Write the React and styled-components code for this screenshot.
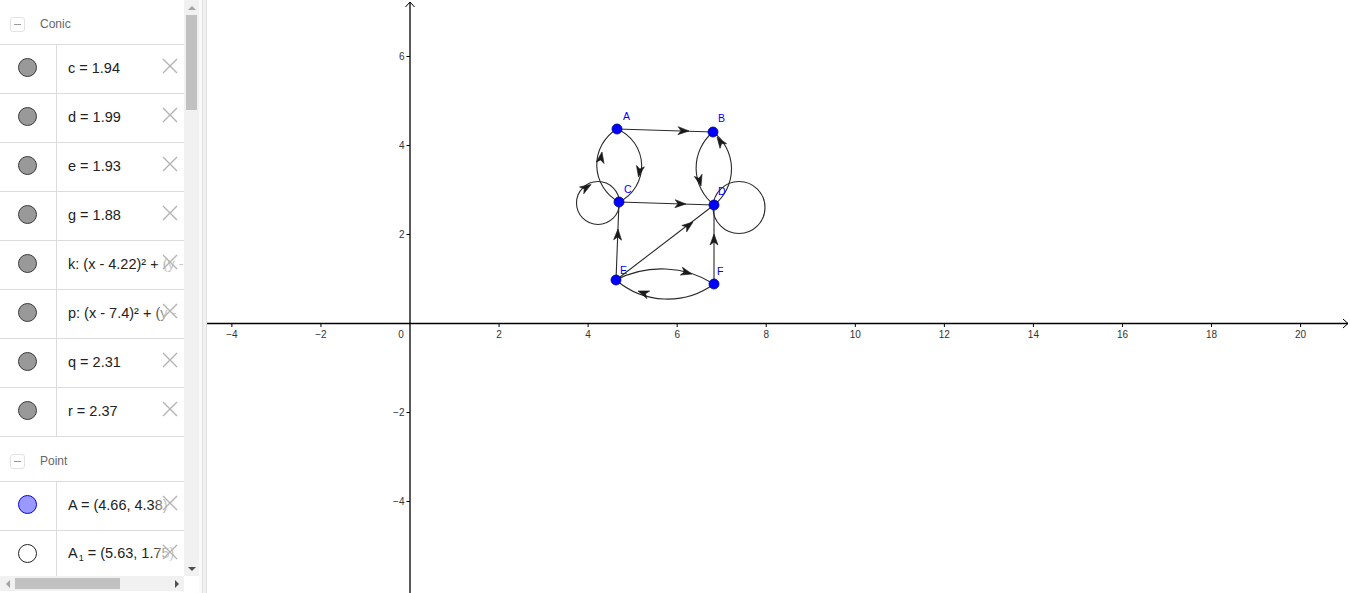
import React from "react";
import styled, { createGlobalStyle } from "styled-components";

const GlobalStyle = createGlobalStyle`
  html, body { margin: 0; padding: 0; background: #fff; overflow: hidden; }
  body { font-family: "Liberation Sans", Arial, sans-serif; }
`;

const Page = styled.div`
  display: flex;
  width: 1350px;
  height: 593px;
  background: #fff;
`;

const AlgebraPanel = styled.div`
  flex: none;
  width: 199px;
  height: 593px;
  display: grid;
  grid-template-columns: 184px 15px;
  grid-template-rows: 576px 15px;
  background: #fff;
`;

const ListArea = styled.div`
  overflow: hidden;
  position: relative;
`;

const GroupHeader = styled.div`
  height: 45px;
  box-sizing: border-box;
  padding: 4px 0 0 10px;
  display: flex;
  align-items: center;
  border-bottom: 1px solid #dddddd;
`;

const Toggle = styled.span`
  width: 15px;
  height: 15px;
  box-sizing: border-box;
  border: 1px solid #e2e2e2;
  border-radius: 3px;
  display: flex;
  align-items: center;
  justify-content: center;
  &::after {
    content: "";
    width: 7px;
    height: 1px;
    background: #9a9a9a;
  }
`;

const GroupTitle = styled.span`
  margin-left: 15px;
  font-size: 12px;
  color: #666;
`;

const Row = styled.div`
  position: relative;
  display: flex;
  height: 49px;
  box-sizing: border-box;
  border-bottom: 1px solid #dddddd;
`;

const MarkerCell = styled.div`
  flex: none;
  width: 57px;
  box-sizing: border-box;
  border-right: 1px solid #dddddd;
  display: flex;
  align-items: center;
  justify-content: center;
  padding: 0 1px 3px 0;
`;

const Dot = styled.span`
  width: 19px;
  height: 19px;
  box-sizing: border-box;
  border-radius: 50%;
  background: ${(p) => p.$fill};
  border: 1px solid ${(p) => p.$stroke};
`;

const Formula = styled.div`
  flex: 1;
  min-width: 0;
  display: flex;
  align-items: center;
  padding: 0 0 3px 11px;
  font-size: 14.5px;
  color: #222;
  white-space: nowrap;
  overflow: hidden;
`;

const Sub = styled.sub`
  font-size: 9px;
  vertical-align: -3px;
  margin-left: 1px;
`;

const Delete = styled.span`
  position: absolute;
  left: 154px;
  top: 8px;
  width: 30px;
  height: 26px;
  display: flex;
  align-items: center;
  justify-content: flex-end;
  padding-right: 6px;
  box-sizing: border-box;
  background: linear-gradient(to right, rgba(255,255,255,0), rgba(255,255,255,0.75) 40%, rgba(255,255,255,0.75));
`;

const VScroll = styled.div`
  background: #f1f1f1;
  display: flex;
  flex-direction: column;
  align-items: center;
`;

const HScroll = styled.div`
  background: #f1f1f1;
  display: flex;
  align-items: center;
`;

const Corner = styled.div`
  background: #fff;
`;

const ArrowBox = styled.div`
  flex: none;
  width: 15px;
  height: 15px;
  display: flex;
  align-items: center;
  justify-content: center;
`;

const Tri = styled.span`
  width: 0;
  height: 0;
  ${(p) =>
    p.$dir === "up"
      ? `border-left: 4px solid transparent; border-right: 4px solid transparent; border-bottom: 4px solid ${p.$color};`
      : p.$dir === "down"
      ? `border-left: 4px solid transparent; border-right: 4px solid transparent; border-top: 4px solid ${p.$color};`
      : p.$dir === "left"
      ? `border-top: 4px solid transparent; border-bottom: 4px solid transparent; border-right: 4px solid ${p.$color};`
      : `border-top: 4px solid transparent; border-bottom: 4px solid transparent; border-left: 4px solid ${p.$color};`}
`;

const VThumb = styled.div`
  flex: none;
  width: 11px;
  height: 95px;
  background: #c1c1c1;
`;

const HThumb = styled.div`
  flex: none;
  width: 105px;
  height: 11px;
  background: #c1c1c1;
`;

const Spacer = styled.div`
  flex: 1;
`;

const Gap = styled.div`
  flex: none;
  width: 3px;
  background: #fafafa;
`;

const Splitter = styled.div`
  flex: none;
  width: 3px;
  background: #f2f2f2;
  border-left: 1px solid #e0e0e0;
  border-right: 1px solid #e0e0e0;
`;

const Graphics = styled.div`
  flex: 1;
  height: 593px;
  overflow: hidden;
  svg { display: block; }
`;

const XIcon = () => (
  <svg width="16" height="16" viewBox="0 0 16 16">
    <path d="M1 1 L15 15 M15 1 L1 15" stroke="#b3b3b3" strokeWidth="1.4" fill="none" />
  </svg>
);

const conics = [
  "c = 1.94",
  "d = 1.99",
  "e = 1.93",
  "g = 1.88",
  "k: (x - 4.22)² + (y -",
  "p: (x - 7.4)² + (y -",
  "q = 2.31",
  "r = 2.37",
];

const ItemRow = ({ fill, stroke, children }) => (
  <Row>
    <MarkerCell>
      <Dot $fill={fill} $stroke={stroke} />
    </MarkerCell>
    <Formula>{children}</Formula>
    <Delete>
      <XIcon />
    </Delete>
  </Row>
);

// graph helpers
const X0 = 410;
const Y0 = 323.5;
const S = 44.53;
const sx = (u) => X0 + u * S;
const sy = (v) => Y0 - v * 44.5;

const Arrowhead = ({ x, y, a }) => (
  <path
    d="M0,0 L-11,-4 L-8,0 L-11,4 Z"
    transform={`translate(${x},${y}) rotate(${a})`}
    fill="#1a1a1a"
    stroke="#1a1a1a"
    strokeWidth="0.6"
    strokeLinejoin="round"
  />
);

const pts = {
  A: [617, 129],
  B: [713, 132],
  C: [619, 202],
  D: [714, 205],
  E: [616, 280],
  F: [714, 284],
};

const labels = [
  ["A", 623, 120],
  ["B", 718, 122],
  ["C", 624, 193],
  ["D", 718, 195],
  ["E", 620, 274],
  ["F", 717, 275],
];

const edgeColor = "#2a2a2a";

const Graph = () => {
  const xt = [-4, -2, 2, 4, 6, 8, 10, 12, 14, 16, 18, 20];
  const yt = [6, 4, 2, -2, -4];
  const fmt = (n) => (n < 0 ? "\u2212" + Math.abs(n) : String(n));
  const line = (p, q) => `M${pts[p][0]},${pts[p][1]} L${pts[q][0]},${pts[q][1]}`;
  return (
    <svg width="1143" height="593" viewBox="207 0 1143 593">
      <line x1="207" y1={Y0} x2="1348" y2={Y0} stroke="#000" strokeWidth="1.3" />
      <line x1={X0} y1="2" x2={X0} y2="593" stroke="#000" strokeWidth="1.3" />
      <path d={`M1343,${Y0 - 4.5} L1348,${Y0} L1343,${Y0 + 4.5}`} stroke="#000" strokeWidth="1" fill="none" />
      <path d={`M${X0 - 4.5},7 L${X0},2 L${X0 + 4.5},7`} stroke="#000" strokeWidth="1" fill="none" />
      {xt.map((u) => (
        <g key={"x" + u}>
          <line x1={sx(u)} y1={Y0} x2={sx(u)} y2={Y0 + 3.5} stroke="#000" strokeWidth="1" />
          <text x={sx(u)} y="337.5" fontSize="10" fill="#333" textAnchor="middle" fontFamily="Liberation Sans, Arial, sans-serif">
            {fmt(u)}
          </text>
        </g>
      ))}
      <text x="401" y="337.5" fontSize="10" fill="#333" textAnchor="middle" fontFamily="Liberation Sans, Arial, sans-serif">
        0
      </text>
      {yt.map((v) => (
        <g key={"y" + v}>
          <line x1={X0 - 3.5} y1={sy(v)} x2={X0} y2={sy(v)} stroke="#000" strokeWidth="1" />
          <text x="404.5" y={sy(v) + 3.8} fontSize="10" fill="#333" textAnchor="end" fontFamily="Liberation Sans, Arial, sans-serif">
            {fmt(v)}
          </text>
        </g>
      ))}

      <g stroke={edgeColor} strokeWidth="1.1" fill="none">
        <path d={line("A", "B")} />
        <path d={line("C", "D")} />
        <path d={line("E", "C")} />
        <path d={line("E", "D")} />
        <path d={line("F", "D")} />
        <path d="M617,129 A42,42 0 0 0 619,202" />
        <path d="M617,129 A40,40 0 0 1 619,202" />
        <path d="M713,132 A47,47 0 0 0 714,205" />
        <path d="M713,132 A46,46 0 0 1 714,205" />
        <path d="M616,280 A99,99 0 0 1 714,284" />
        <path d="M616,280 A79,79 0 0 0 714,284" />
        <circle cx="598" cy="203" r="21.5" />
        <circle cx="739" cy="207.5" r="26" />
      </g>
      <Arrowhead x={689} y={131} a={1.8} />
      <Arrowhead x={686} y={204} a={1.8} />
      <Arrowhead x={618} y={229} a={-87.8} />
      <Arrowhead x={693} y={222} a={-37.4} />
      <Arrowhead x={714} y={234} a={-90} />
      <Arrowhead x={602} y={152} a={-80} />
      <Arrowhead x={638.5} y={177} a={100} />
      <Arrowhead x={701} y={186} a={75} />
      <Arrowhead x={717} y={137} a={-125} />
      <Arrowhead x={692} y={274} a={15} />
      <Arrowhead x={638} y={291} a={200} />
      <Arrowhead x={591} y={184.5} a={-32} />

      {Object.entries(pts).map(([k, [x, y]]) => (
        <circle key={k} cx={x} cy={y} r="5" fill="#0000ff" stroke="#00008a" strokeWidth="0.8" />
      ))}
      {labels.map(([t, x, y]) => (
        <text key={t} x={x} y={y} fontSize="10.5" fill="#0000ff" fontFamily="Liberation Sans, Arial, sans-serif">
          {t}
        </text>
      ))}
    </svg>
  );
};

export default function App() {
  return (
    <>
      <GlobalStyle />
      <Page>
        <AlgebraPanel>
          <ListArea>
            <GroupHeader>
              <Toggle />
              <GroupTitle>Conic</GroupTitle>
            </GroupHeader>
            {conics.map((t) => (
              <ItemRow key={t} fill="#999999" stroke="#3a3a3a">
                {t}
              </ItemRow>
            ))}
            <GroupHeader>
              <Toggle />
              <GroupTitle>Point</GroupTitle>
            </GroupHeader>
            <ItemRow fill="#9999ff" stroke="#0000ff">
              A = (4.66, 4.38)
            </ItemRow>
            <ItemRow fill="#ffffff" stroke="#222222">
              <span>
                A<Sub>1</Sub> = (5.63, 1.75)
              </span>
            </ItemRow>
          </ListArea>
          <VScroll>
            <ArrowBox>
              <Tri $dir="up" $color="#a3a3a3" />
            </ArrowBox>
            <VThumb />
            <Spacer />
            <ArrowBox>
              <Tri $dir="down" $color="#505050" />
            </ArrowBox>
          </VScroll>
          <HScroll>
            <ArrowBox>
              <Tri $dir="left" $color="#a3a3a3" />
            </ArrowBox>
            <HThumb />
            <Spacer />
            <ArrowBox>
              <Tri $dir="right" $color="#505050" />
            </ArrowBox>
          </HScroll>
          <Corner />
        </AlgebraPanel>
        <Gap />
        <Splitter />
        <Graphics>
          <Graph />
        </Graphics>
      </Page>
    </>
  );
}
